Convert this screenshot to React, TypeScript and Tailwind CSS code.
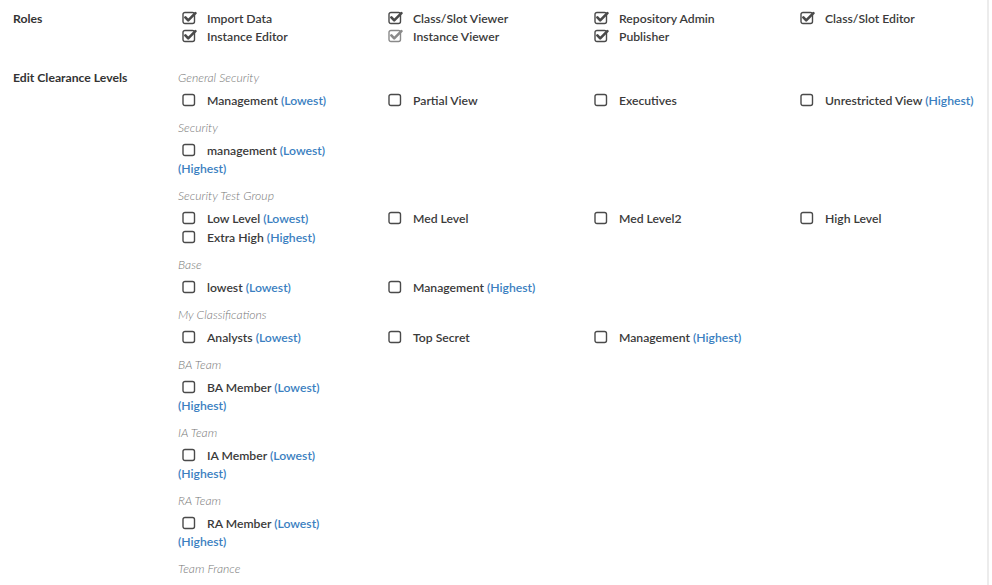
type Item = { label: string; low?: boolean; high?: boolean; checked?: boolean; dim?: boolean };

const roles: Item[] = [
  { label: "Import Data", checked: true },
  { label: "Class/Slot Viewer", checked: true },
  { label: "Repository Admin", checked: true },
  { label: "Class/Slot Editor", checked: true },
  { label: "Instance Editor", checked: true },
  { label: "Instance Viewer", checked: true, dim: true },
  { label: "Publisher", checked: true },
];

const groups: { title: string; items: Item[] }[] = [
  {
    title: "General Security",
    items: [
      { label: "Management", low: true },
      { label: "Partial View" },
      { label: "Executives" },
      { label: "Unrestricted View", high: true },
    ],
  },
  { title: "Security", items: [{ label: "management", low: true, high: true }] },
  {
    title: "Security Test Group",
    items: [
      { label: "Low Level", low: true },
      { label: "Med Level" },
      { label: "Med Level2" },
      { label: "High Level" },
      { label: "Extra High", high: true },
    ],
  },
  {
    title: "Base",
    items: [
      { label: "lowest", low: true },
      { label: "Management", high: true },
    ],
  },
  {
    title: "My Classifications",
    items: [
      { label: "Analysts", low: true },
      { label: "Top Secret" },
      { label: "Management", high: true },
    ],
  },
  { title: "BA Team", items: [{ label: "BA Member", low: true, high: true }] },
  { title: "IA Team", items: [{ label: "IA Member", low: true, high: true }] },
  { title: "RA Team", items: [{ label: "RA Member", low: true, high: true }] },
  { title: "Team France", items: [] },
];

function Box({ checked, dim }: { checked?: boolean; dim?: boolean }) {
  const c = dim ? "#8a8a8a" : "#4a4a4a";
  return (
    <svg width="15" height="14" viewBox="0 0 15 14" className="inline-block align-[-2px] ml-1 mr-[10px]">
      <rect x="1" y="1.5" width="11.5" height="11" rx="2" fill="white" stroke={c} strokeWidth="1.4" />
      {checked && (
        <path d="M3.4 6.4 L6.2 9.4 L13.4 2.2" fill="none" stroke={c} strokeWidth="2.6" strokeLinecap="round" strokeLinejoin="round" />
      )}
    </svg>
  );
}

function Row({ item }: { item: Item }) {
  return (
    <div className="leading-[18px] text-[#3a3a3a] font-semibold">
      <Box checked={item.checked} dim={item.dim} />
      {item.label}
      {item.low && <span className="text-[#3b7fc1]"> (Lowest)</span>}
      {item.low && item.high && <br />}
      {item.high && <span className="text-[#3b7fc1]">{item.low ? "" : " "}(Highest)</span>}
    </div>
  );
}

export default function App() {
  return (
    <div
      className="w-[989px] min-h-[585px] bg-white border-r-2 border-[#ececec] text-[12.2px]"
      style={{ fontFamily: "Lato, 'Open Sans', sans-serif" }}
    >
      <div className="flex pt-[10px]">
        <div className="w-[178px] pl-[13px] font-bold text-[#333] leading-[18px]">Roles</div>
        <div className="grid grid-cols-[206px_206px_206px_1fr]">
          {roles.map((r) => (
            <Row key={r.label} item={r} />
          ))}
        </div>
      </div>

      <div className="flex mt-[23px]">
        <div className="w-[178px] pl-[13px] font-bold text-[#333] leading-[18px]">Edit Clearance Levels</div>
        <div className="flex-1">
          {groups.map((g) => (
            <div key={g.title} className="mb-[9px]">
              <div className="italic font-light text-[#777] leading-[18px] mb-[5px]">{g.title}</div>
              {g.items.length > 0 && (
                <div className="grid grid-cols-[206px_206px_206px_1fr] gap-y-px">
                  {g.items.map((it, i) => (
                    <Row key={i} item={it} />
                  ))}
                </div>
              )}
            </div>
          ))}
        </div>
      </div>
    </div>
  );
}
